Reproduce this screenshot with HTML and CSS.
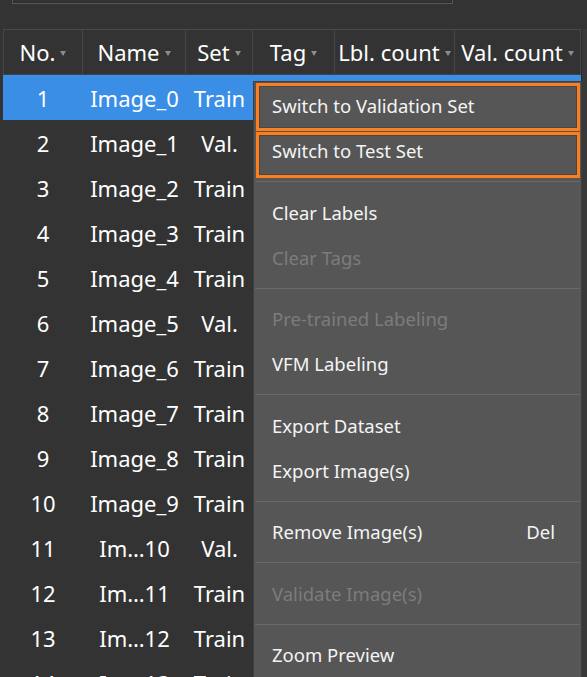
FILE: index.html
```html
<!DOCTYPE html>
<html lang="en">
<head>
  <meta charset="UTF-8" />
  <title>Image List</title>
  <link rel="stylesheet" href="styles.css">
</head>
<body>

  <div class="toolbar">
    <input class="search" type="text">
  </div>

  <div class="main">
    <div class="table">
      <div class="thead">
        <div class="th">No.<i class="arrow"></i></div>
        <div class="th">Name<i class="arrow"></i></div>
        <div class="th">Set<i class="arrow"></i></div>
        <div class="th">Tag<i class="arrow"></i></div>
        <div class="th">Lbl. count<i class="arrow"></i></div>
        <div class="th">Val. count<i class="arrow"></i></div>
      </div>

      <div class="row selected"><span>1</span><span>Image_0</span><span>Train</span><span></span><span></span><span></span></div>
      <div class="row"><span>2</span><span>Image_1</span><span>Val.</span><span></span><span></span><span></span></div>
      <div class="row"><span>3</span><span>Image_2</span><span>Train</span><span></span><span></span><span></span></div>
      <div class="row"><span>4</span><span>Image_3</span><span>Train</span><span></span><span></span><span></span></div>
      <div class="row"><span>5</span><span>Image_4</span><span>Train</span><span></span><span></span><span></span></div>
      <div class="row"><span>6</span><span>Image_5</span><span>Val.</span><span></span><span></span><span></span></div>
      <div class="row"><span>7</span><span>Image_6</span><span>Train</span><span></span><span></span><span></span></div>
      <div class="row"><span>8</span><span>Image_7</span><span>Train</span><span></span><span></span><span></span></div>
      <div class="row"><span>9</span><span>Image_8</span><span>Train</span><span></span><span></span><span></span></div>
      <div class="row"><span>10</span><span>Image_9</span><span>Train</span><span></span><span></span><span></span></div>
      <div class="row"><span>11</span><span>Im…10</span><span>Val.</span><span></span><span></span><span></span></div>
      <div class="row"><span>12</span><span>Im…11</span><span>Train</span><span></span><span></span><span></span></div>
      <div class="row"><span>13</span><span>Im…12</span><span>Train</span><span></span><span></span><span></span></div>
      <div class="row"><span>14</span><span>Im…13</span><span>Train</span><span></span><span></span><span></span></div>
    </div>
    <div class="scroll"></div>
  </div>

  <!-- context menu -->
  <div class="menu">
    <div class="item">Switch to Validation Set</div>
    <div class="item">Switch to Test Set</div>
    <div class="sep"></div>
    <div class="item">Clear Labels</div>
    <div class="item off">Clear Tags</div>
    <div class="sep"></div>
    <div class="item off">Pre-trained Labeling</div>
    <div class="item">VFM Labeling</div>
    <div class="sep"></div>
    <div class="item">Export Dataset</div>
    <div class="item">Export Image(s)</div>
    <div class="sep"></div>
    <div class="item">Remove Image(s)<span class="key">Del</span></div>
    <div class="sep"></div>
    <div class="item off">Validate Image(s)</div>
    <div class="sep"></div>
    <div class="item">Zoom Preview</div>

    <!-- highlight boxes -->
    <div class="mark first"></div>
    <div class="mark second"></div>
  </div>

</body>
</html>
```

FILE: styles.css
```css
body {
  margin: 0;
  background-color: #333333;
  color: #ffffff;
  font-family: "Noto Sans", "Open Sans", sans-serif;
  height: 100vh;
  overflow: hidden;
  position: relative;
}
.toolbar {
  height: 29px;
  box-sizing: border-box;
  padding: 0 0 25px 12px;
  display: flex;
  align-items: flex-end;
  overflow: hidden;
}
.search {
  flex: none;
  width: 441px;
  height: 30px;
  margin: 0;
  padding: 0;
  box-sizing: border-box;
  background: #333333;
  border: 1px solid #585858;
  box-shadow: inset 0 0 0 1px #2c2c2c;
}
.main {
  display: flex;
  padding-left: 3px;
}
.table {
  width: 578px;
}
.scroll {
  width: 6px;
  border-left: 1px solid #2b2b2b;
  background: #393939;
}
.thead, .row {
  display: grid;
  grid-template-columns: 80px 103px 67px 82px 120px 126px;
}
.thead {
  height: 46px;
  box-sizing: border-box;
  border-top: 1px solid #4a4a4a;
  border-bottom: 1px solid #444444;
}
.th {
  display: flex;
  align-items: center;
  justify-content: center;
  gap: 5px;
  font-size: 22px;
  border-right: 1px solid #464646;
  white-space: nowrap;
}
.th:first-child {
  border-left: 1px solid #464646;
}
.arrow {
  width: 0;
  height: 0;
  border-left: 3.5px solid transparent;
  border-right: 3.5px solid transparent;
  border-top: 5px solid #8c8c8c;
  margin-top: 2px;
}
.row {
  height: 45px;
  align-items: center;
  font-size: 22px;
}
.row span {
  text-align: center;
  white-space: nowrap;
}
.row.selected {
  background: #3a8ee6;
}
.menu {
  position: absolute;
  left: 253px;
  top: 81px;
  width: 329px;
  box-sizing: border-box;
  padding: 1px 0 10px;
  background: #565656;
  border: 1px solid #3e3e3e;
  font-size: 18.5px;
  color: #f4f4f4;
}
.item {
  height: 45px;
  display: flex;
  align-items: center;
  justify-content: space-between;
  padding: 0 26px 0 18px;
}
.item.off {
  color: #7c7c7c;
}
.sep {
  height: 1px;
  margin: 8px 1px 7.5px;
  background: #686868;
}
.mark {
  position: absolute;
  left: 2px;
  width: 324px;
  box-sizing: border-box;
  border: 3px solid #fb7f1f;
  box-shadow: inset 0 0 0 1px #474747;
}
.mark.first {
  top: 1px;
  height: 48px;
}
.mark.second {
  top: 50px;
  height: 46px;
}
```
